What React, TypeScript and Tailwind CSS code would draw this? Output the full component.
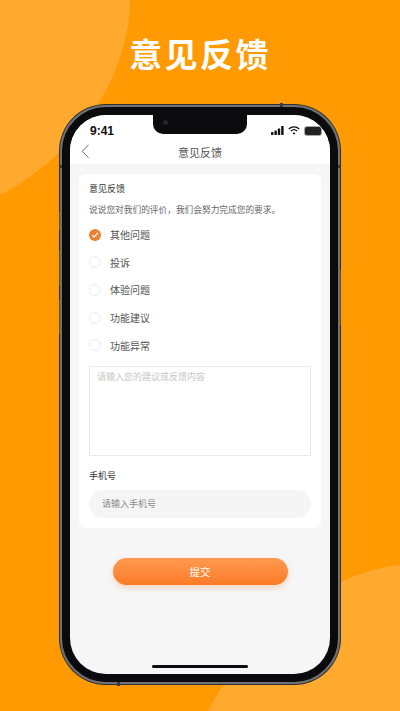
import React from "react";

const cjk = { fontFamily: '"Noto Sans CJK SC", "Noto Sans", sans-serif' };
const options = ["其他问题", "投诉", "体验问题", "功能建议", "功能异常"];

function Radio({ on }: { on: boolean }) {
  if (on) {
    return (
      <span className="flex h-[12px] w-[12px] items-center justify-center rounded-full bg-[#ee8130]">
        <svg width="8" height="8" viewBox="0 0 8 8" fill="none">
          <path d="M1.2 4.2 L3.2 6 L6.8 2" stroke="#fff" strokeWidth="1.2" />
        </svg>
      </span>
    );
  }
  return <span className="h-[12px] w-[12px] rounded-full border border-[#ebebeb] bg-white" />;
}

export default function App() {
  return (
    <div style={cjk} className="relative flex h-[711px] w-[400px] flex-col items-center overflow-hidden bg-[#ff9a03]">
      <svg className="absolute left-0 top-0" width="400" height="711" viewBox="0 0 400 711">
        <path d="M0 0 H130 C130 80 70 160 0 195 Z" fill="#ffa92e" />
        <path d="M400 565 C330 572 250 630 208 711 H400 Z" fill="#ffa92e" />
      </svg>

      <h1 className="relative mt-[32px] h-[42px] text-[33px] font-bold leading-[42px] tracking-[2.4px] text-white">意见反馈</h1>

      <div className="relative mt-[31px] h-[579px] w-[280px] rounded-[46px] border-2 border-[#6f7174] bg-[#0b0b0d] p-[8px] shadow-[0_0_0_1px_#2f2f2f]">
        {/* side buttons and antenna bands */}
        <span className="absolute left-[-3px] top-[105px] h-[18px] w-[1px] bg-[#6b5423]" />
        <span className="absolute left-[-3px] top-[144px] h-[34px] w-[1px] bg-[#6b5423]" />
        <span className="absolute left-[-3px] top-[193px] h-[34px] w-[1px] bg-[#6b5423]" />
        <span className="absolute right-[-3px] top-[163px] h-[55px] w-[1px] bg-[#6b5423]" />
        <span className="absolute left-[-3px] top-[58px] h-[3px] w-[3px] bg-[#3a3a3a]" />
        <span className="absolute right-[-3px] top-[58px] h-[3px] w-[3px] bg-[#3a3a3a]" />
        <span className="absolute right-[55px] top-[-4px] h-[4px] w-[3px] bg-[#3a3a3a]" />
        <span className="absolute bottom-[-4px] left-[55px] h-[4px] w-[3px] bg-[#3a3a3a]" />

        <div className="relative flex h-full w-full flex-col overflow-hidden rounded-[36px] bg-[#f6f6f6]">
          {/* notch */}
          <div className="absolute left-1/2 top-0 h-[19px] w-[94px] -translate-x-1/2 rounded-b-[10px] bg-[#0b0b0d]">
            <span className="absolute left-[10px] top-[5px] h-[5px] w-[5px] rounded-full bg-[#23233a]" />
          </div>

          <div className="bg-white">
            <div className="flex h-[24px] items-end justify-between pl-[20px] pr-[9px]">
              <span style={{ fontFamily: '"Liberation Sans", sans-serif' }} className="text-[12px] font-semibold leading-[16px] text-[#111]">9:41</span>
              <div className="flex items-center gap-[4px] pb-[4px]">
                <svg width="13" height="9" viewBox="0 0 13 9" fill="#111">
                  <rect x="0" y="6" width="2.4" height="3" rx="0.5" />
                  <rect x="3.4" y="4.4" width="2.4" height="4.6" rx="0.5" />
                  <rect x="6.8" y="2.4" width="2.4" height="6.6" rx="0.5" />
                  <rect x="10.2" y="0" width="2.4" height="9" rx="0.5" />
                </svg>
                <svg width="12" height="9" viewBox="0 0 12 9" fill="none" stroke="#111" strokeWidth="1.4">
                  <path d="M0.8 3 C3.8 0.2 8.2 0.2 11.2 3" />
                  <path d="M2.9 5 C4.7 3.4 7.3 3.4 9.1 5" />
                  <path d="M6 8.8 L4.6 7 C5.4 6.3 6.6 6.3 7.4 7 Z" fill="#111" stroke="none" />
                </svg>
                <span className="ml-[1px] h-[8px] w-[16px] rounded-[2px] bg-[#222] shadow-[0_0_0_1px_#aaa]" />
              </div>
            </div>
            <div className="relative flex h-[25px] items-center justify-center">
              <svg className="absolute left-[11px] top-[5px]" width="9" height="15" viewBox="0 0 9 15" fill="none" stroke="#666" strokeWidth="1">
                <path d="M7.5 1 L1.2 7.3 L7.5 13.6" />
              </svg>
              <span className="text-[11px] leading-[16px] text-[#555]">意见反馈</span>
            </div>
          </div>

          <div className="mx-[9px] mt-[10px] flex h-[354px] flex-col rounded-[6px] bg-white px-[10px]">
            <div className="mt-[8px] text-[9px] leading-[13px] text-[#333]">意见反馈</div>
            <div className="mt-[8px] text-[8.7px] leading-[13px] text-[#666]">说说您对我们的评价，我们会努力完成您的要求。</div>
            <div className="mt-[5px] flex flex-col">
              {options.map((o, i) => (
                <div key={o} className="flex h-[27.6px] items-center gap-[9px]">
                  <Radio on={i === 0} />
                  <span className="text-[10px] text-[#555]">{o}</span>
                </div>
              ))}
            </div>
            <div className="mt-[7px] h-[90px] border border-[#eaeaea] px-[7px] py-[3px] text-[9px] leading-[13px] text-[#c6c6c6]">请输入您的建议或反馈内容</div>
            <div className="mt-[13px] text-[9px] leading-[13px] text-[#333]">手机号</div>
            <div className="mt-[8px] flex h-[28px] items-center rounded-full bg-[#f5f5f5] px-[13px] text-[9px] text-[#8a8a8a]">请输入手机号</div>
          </div>

          <button className="mx-auto mt-[30px] h-[27px] w-[175px] rounded-full bg-gradient-to-b from-[#ff9a50] to-[#fb7a24] text-[10.5px] text-white shadow-[0_3px_6px_rgba(251,122,36,0.25)]">提交</button>

          <div className="absolute bottom-[6px] left-1/2 h-[3px] w-[96px] -translate-x-1/2 rounded-full bg-[#0b0b0d]" />
        </div>
      </div>
    </div>
  );
}
